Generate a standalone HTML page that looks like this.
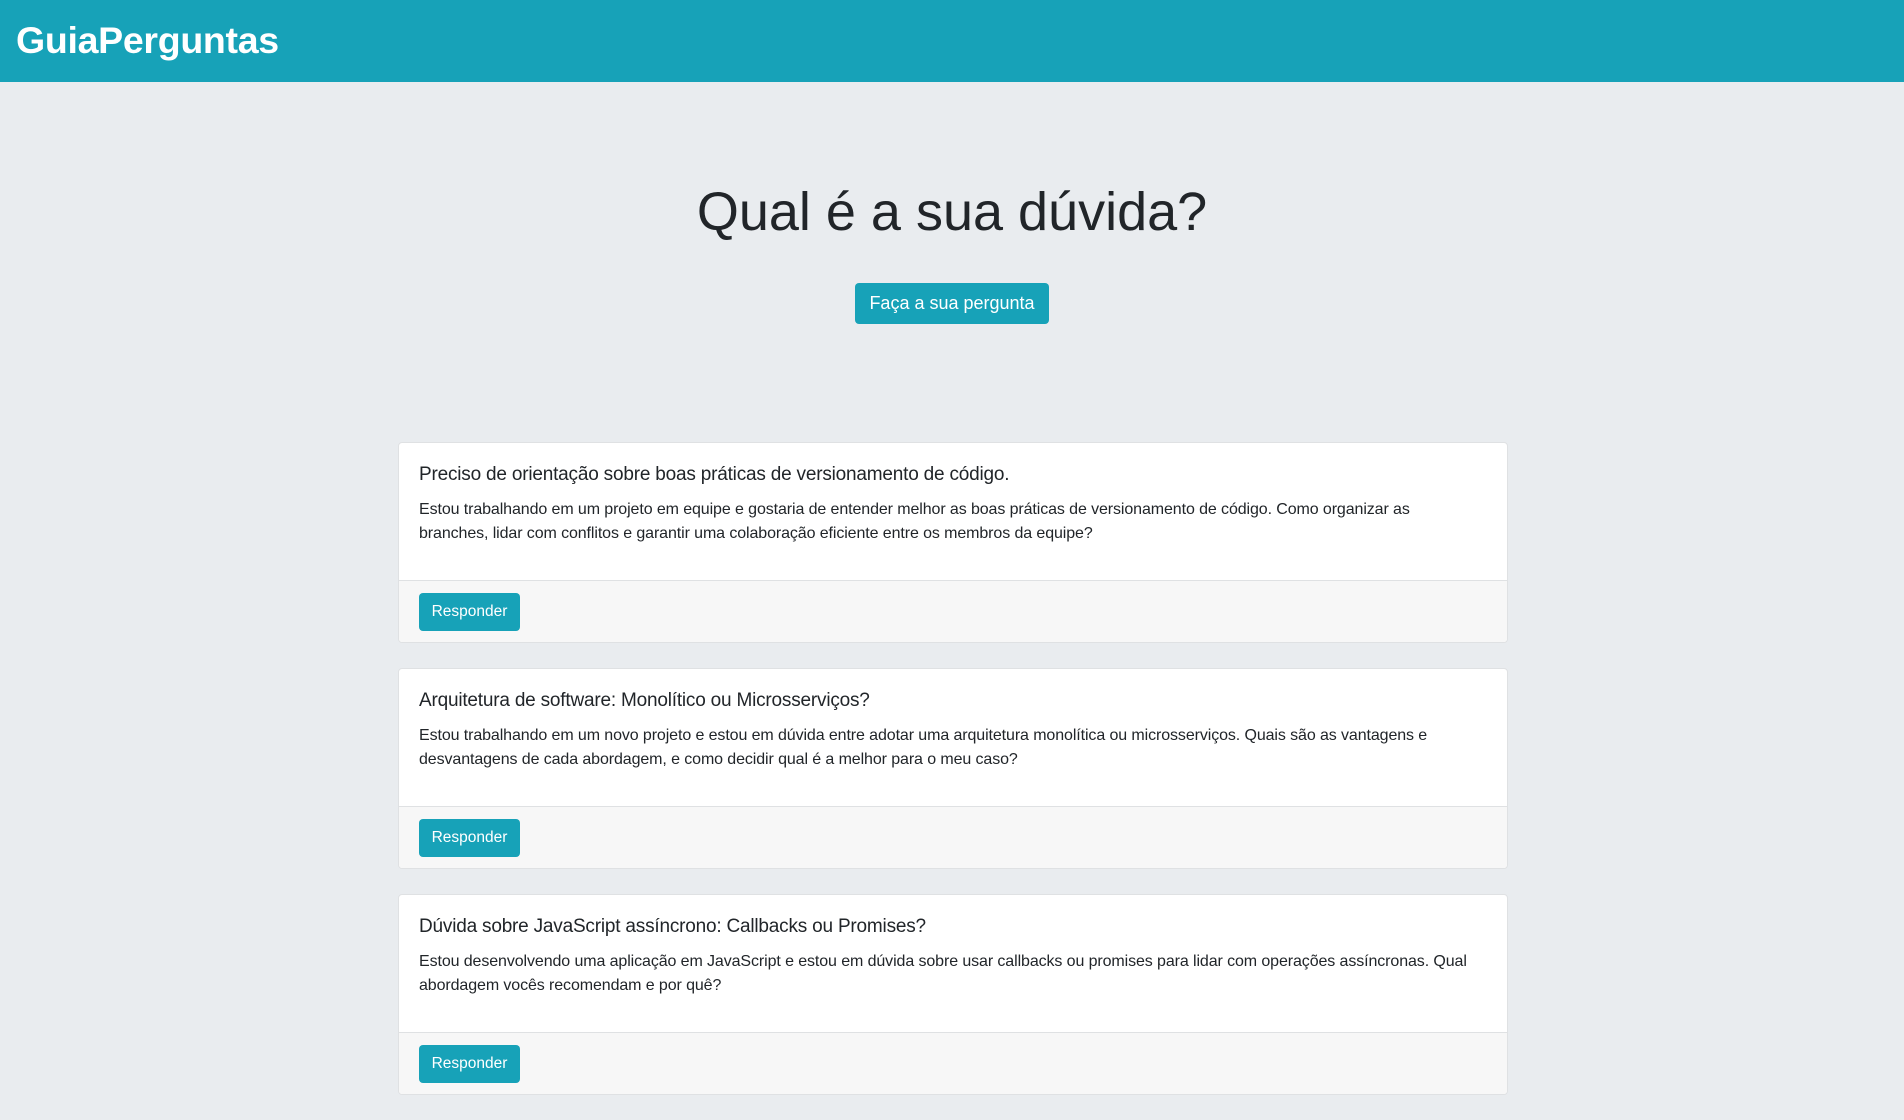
<!DOCTYPE html>
<html><head><meta charset="utf-8"><style>
*{box-sizing:border-box;margin:0;padding:0}
body{width:1904px;height:1080px;overflow:hidden;background:#e9ecef;font-family:"Liberation Sans",sans-serif;color:#212529}
.nav{height:82px;background:#17a2b8;padding-left:16px}
.brand{color:#fff;font-weight:bold;font-size:37.5px;line-height:80px;letter-spacing:-0.3px}
h1{text-align:center;font-weight:normal;font-size:54px;position:absolute;top:178px;width:100%;line-height:68px}
.bigbtn{position:absolute;left:855px;top:283px;width:194px;height:41px;background:#17a2b8;color:#fff;border-radius:4px;font-size:18px;text-align:center;line-height:41px}
.cards{position:absolute;left:398px;top:442px;width:1110px}
.card{background:#fff;border:1px solid #dfe1e3;border-radius:4px;margin-bottom:25px;overflow:hidden}
.body{padding:20px 20px 20px}
.body h5{font-size:19px;font-weight:normal;line-height:24px;margin-bottom:11px;letter-spacing:-0.2px}
.body p{font-size:16px;line-height:24px;margin-bottom:14px;letter-spacing:-0.1px;white-space:nowrap}
.foot{background:#f7f7f7;border-top:1px solid #dfe1e3;padding:12px 20px;height:62px}
.btn{display:inline-block;background:#17a2b8;color:#fff;border-radius:4px;width:101px;height:38px;line-height:38px;text-align:center;font-size:15.5px}
</style></head><body>
<div class="nav"><span class="brand">GuiaPerguntas</span></div>
<h1>Qual é a sua dúvida?</h1>
<div class="bigbtn">Faça a sua pergunta</div>
<div class="cards">
<div class="card"><div class="body"><h5>Preciso de orientação sobre boas práticas de versionamento de código.</h5><p>Estou trabalhando em um projeto em equipe e gostaria de entender melhor as boas práticas de versionamento de código. Como organizar as<br>branches, lidar com conflitos e garantir uma colaboração eficiente entre os membros da equipe?</p></div><div class="foot"><span class="btn">Responder</span></div></div>
<div class="card"><div class="body"><h5>Arquitetura de software: Monolítico ou Microsserviços?</h5><p>Estou trabalhando em um novo projeto e estou em dúvida entre adotar uma arquitetura monolítica ou microsserviços. Quais são as vantagens e<br>desvantagens de cada abordagem, e como decidir qual é a melhor para o meu caso?</p></div><div class="foot"><span class="btn">Responder</span></div></div>
<div class="card"><div class="body"><h5>Dúvida sobre JavaScript assíncrono: Callbacks ou Promises?</h5><p>Estou desenvolvendo uma aplicação em JavaScript e estou em dúvida sobre usar callbacks ou promises para lidar com operações assíncronas. Qual<br>abordagem vocês recomendam e por quê?</p></div><div class="foot"><span class="btn">Responder</span></div></div>
</div>
</body></html>
